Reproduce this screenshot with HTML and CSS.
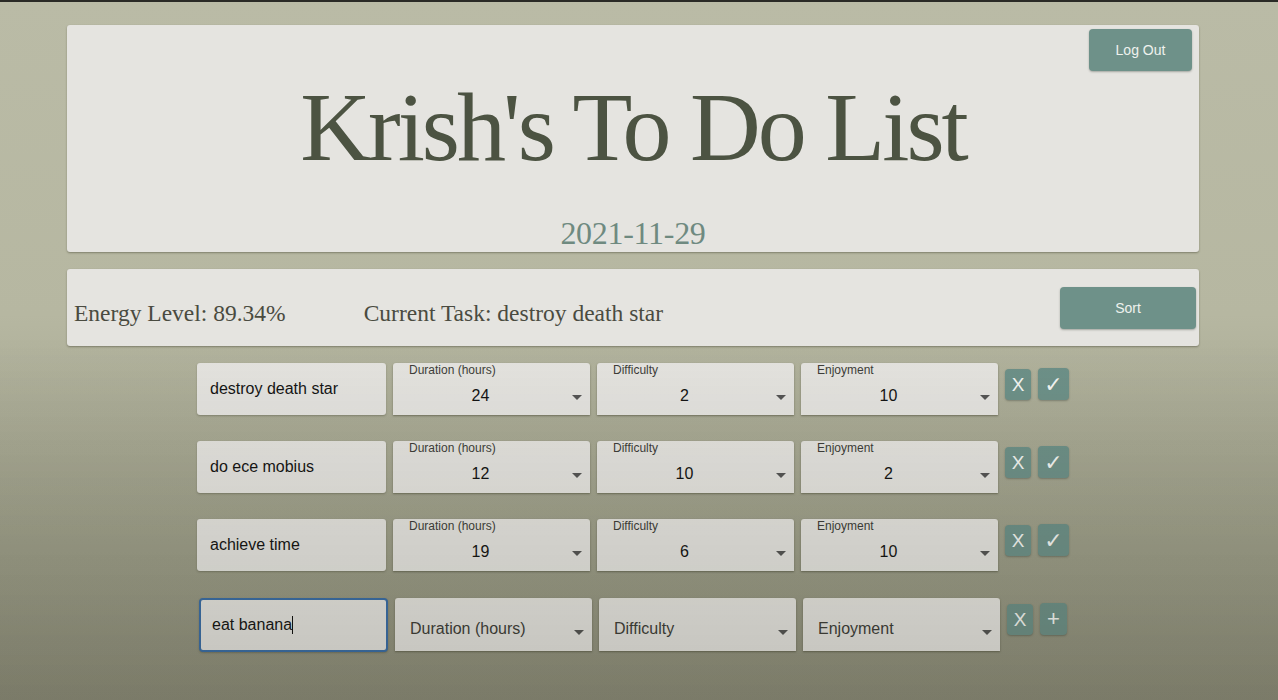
FILE: index.html
```html
<!DOCTYPE html>
<html>
<head>
<meta charset="utf-8">
<link rel="stylesheet" href="styles.css">
</head>
<body>
<div class="page">
  <header class="card header">
    <button class="btn logout">Log Out</button>
    <h1 class="title">Krish's To Do List</h1>
    <div class="date">2021-11-29</div>
  </header>
  <section class="card status">
    <span class="energy">Energy Level: 89.34%</span>
    <span class="current">Current Task: destroy death star</span>
    <button class="btn sort">Sort</button>
  </section>
  <div class="rows">
    <div class="row">
      <div class="text-field">destroy death star</div>
      <div class="select"><span class="label">Duration (hours)</span><span class="value">24</span><span class="arrow"></span></div>
      <div class="select"><span class="label">Difficulty</span><span class="value">2</span><span class="arrow"></span></div>
      <div class="select"><span class="label">Enjoyment</span><span class="value">10</span><span class="arrow"></span></div>
      <button class="icon-btn x">X</button>
      <button class="icon-btn check">✓</button>
    </div>
    <div class="row">
      <div class="text-field">do ece mobius</div>
      <div class="select"><span class="label">Duration (hours)</span><span class="value">12</span><span class="arrow"></span></div>
      <div class="select"><span class="label">Difficulty</span><span class="value">10</span><span class="arrow"></span></div>
      <div class="select"><span class="label">Enjoyment</span><span class="value">2</span><span class="arrow"></span></div>
      <button class="icon-btn x">X</button>
      <button class="icon-btn check">✓</button>
    </div>
    <div class="row">
      <div class="text-field">achieve time</div>
      <div class="select"><span class="label">Duration (hours)</span><span class="value">19</span><span class="arrow"></span></div>
      <div class="select"><span class="label">Difficulty</span><span class="value">6</span><span class="arrow"></span></div>
      <div class="select"><span class="label">Enjoyment</span><span class="value">10</span><span class="arrow"></span></div>
      <button class="icon-btn x">X</button>
      <button class="icon-btn check">✓</button>
    </div>
    <div class="row new">
      <div class="text-field focused">eat banana<span class="caret"></span></div>
      <div class="select empty"><span class="placeholder">Duration (hours)</span><span class="arrow"></span></div>
      <div class="select empty"><span class="placeholder">Difficulty</span><span class="arrow"></span></div>
      <div class="select empty"><span class="placeholder">Enjoyment</span><span class="arrow"></span></div>
      <button class="icon-btn x">X</button>
      <button class="icon-btn plus">+</button>
    </div>
  </div>
</div>
<div class="vignette"></div>
</body>
</html>
```

FILE: styles.css
```css
html, body {
  margin: 0;
  padding: 0;
  height: 100%;
}
body {
  background: linear-gradient(#babba6 0%, #b6b7a1 45%, #9b9c88 80%, #8d8d7b 100%);
  border-top: 2px solid #2a2a26;
  box-sizing: border-box;
  font-family: "Liberation Sans", Arial, sans-serif;
  overflow: hidden;
}
.page {
  width: 1132px;
  margin: 23px 0 0 67px;
  display: flex;
  flex-direction: column;
}
.card {
  background: #e5e4e0;
  border-radius: 3px;
  box-shadow: 0 1px 2px rgba(60, 60, 40, 0.45);
  box-sizing: border-box;
}
.header {
  position: relative;
  height: 227px;
  display: flex;
  flex-direction: column;
  align-items: center;
}
.btn {
  border: none;
  background: #6e9189;
  color: #eef2ee;
  font-family: "Liberation Sans", Arial, sans-serif;
  font-size: 14px;
  border-radius: 4px;
  box-shadow: 0 1px 2px rgba(40, 50, 40, 0.35);
}
.logout {
  position: absolute;
  top: 4px;
  right: 7px;
  width: 103px;
  height: 42px;
}
.title {
  margin: 52px 0 0;
  font-family: "Liberation Serif", "Times New Roman", serif;
  font-weight: normal;
  font-size: 98px;
  letter-spacing: -3px;
  line-height: 100px;
  color: #4c5342;
}
.date {
  margin-top: 38px;
  font-family: "Liberation Serif", "Times New Roman", serif;
  font-size: 32px;
  letter-spacing: -0.3px;
  line-height: 36px;
  color: #6f8a80;
}
.status {
  margin-top: 17px;
  height: 77px;
  display: flex;
  align-items: center;
  padding: 0 3px 0 7px;
  font-family: "Liberation Serif", "Times New Roman", serif;
  font-size: 23.5px;
  color: #4a4b40;
}
.status .energy, .status .current {
  padding-top: 12px;
}
.status .current {
  margin-left: 78px;
}
.sort {
  margin-left: auto;
  width: 136px;
  height: 42px;
}
.rows {
  margin-top: 17px;
  display: flex;
  flex-direction: column;
  align-items: center;
  gap: 26px;
}
.row {
  display: flex;
  align-items: flex-start;
  gap: 7px;
  height: 52px;
}
.row.new {
  margin-top: 1px;
  height: 54px;
}
.text-field {
  width: 189px;
  height: 52px;
  box-sizing: border-box;
  background: #e5e4e0;
  border-radius: 3px;
  box-shadow: 0 1px 2px rgba(60, 60, 40, 0.35);
  padding: 0 13px;
  display: flex;
  align-items: center;
  font-size: 16px;
  color: #151515;
}
.text-field.focused {
  height: 54px;
  border: 2px solid #3b6ea8;
  padding: 0 11px;
  border-radius: 4px;
}
.caret {
  display: inline-block;
  width: 1px;
  height: 18px;
  background: #111;
}
.select {
  position: relative;
  width: 197px;
  height: 52px;
  box-sizing: border-box;
  background: #e5e4e0;
  border-radius: 3px 3px 0 0;
  box-shadow: 0 1px 2px rgba(60, 60, 40, 0.5);
}
.select.empty {
  height: 53px;
}
.select .label {
  position: absolute;
  left: 16px;
  top: 0;
  font-size: 12px;
  color: #3e3e3a;
}
.select .value {
  position: absolute;
  left: 0;
  right: 22px;
  top: 24px;
  text-align: center;
  font-size: 16px;
  color: #141414;
}
.select .placeholder {
  position: absolute;
  left: 15px;
  top: 22px;
  font-size: 16px;
  color: #3e3e3a;
}
.select .arrow {
  position: absolute;
  right: 8px;
  top: 32px;
  width: 0;
  height: 0;
  border-left: 5px solid transparent;
  border-right: 5px solid transparent;
  border-top: 5px solid #555;
}
.icon-btn {
  border: none;
  background: #6e9189;
  color: #f4f6f4;
  border-radius: 4px;
  font-family: "Liberation Sans", Arial, sans-serif;
  padding: 0;
  margin-top: 5px;
  height: 32px;
  box-shadow: 0 1px 2px rgba(40, 50, 40, 0.35);
}
.icon-btn.x {
  width: 26px;
  font-size: 19px;
  margin-top: 6px;
  height: 31px;
}
.icon-btn.check {
  width: 31px;
  font-size: 22px;
  font-weight: bold;
  font-family: "DejaVu Sans", sans-serif;
}
.icon-btn.plus {
  width: 27px;
  font-size: 22px;
  margin-top: 5px;
  height: 32px;
  line-height: 26px;
}
.vignette {
  position: fixed;
  inset: 0;
  pointer-events: none;
  background: linear-gradient(rgba(0,0,0,0) 0%, rgba(0,0,0,0) 48%, rgba(30,30,10,0.08) 70%, rgba(30,30,10,0.16) 100%);
}
```
